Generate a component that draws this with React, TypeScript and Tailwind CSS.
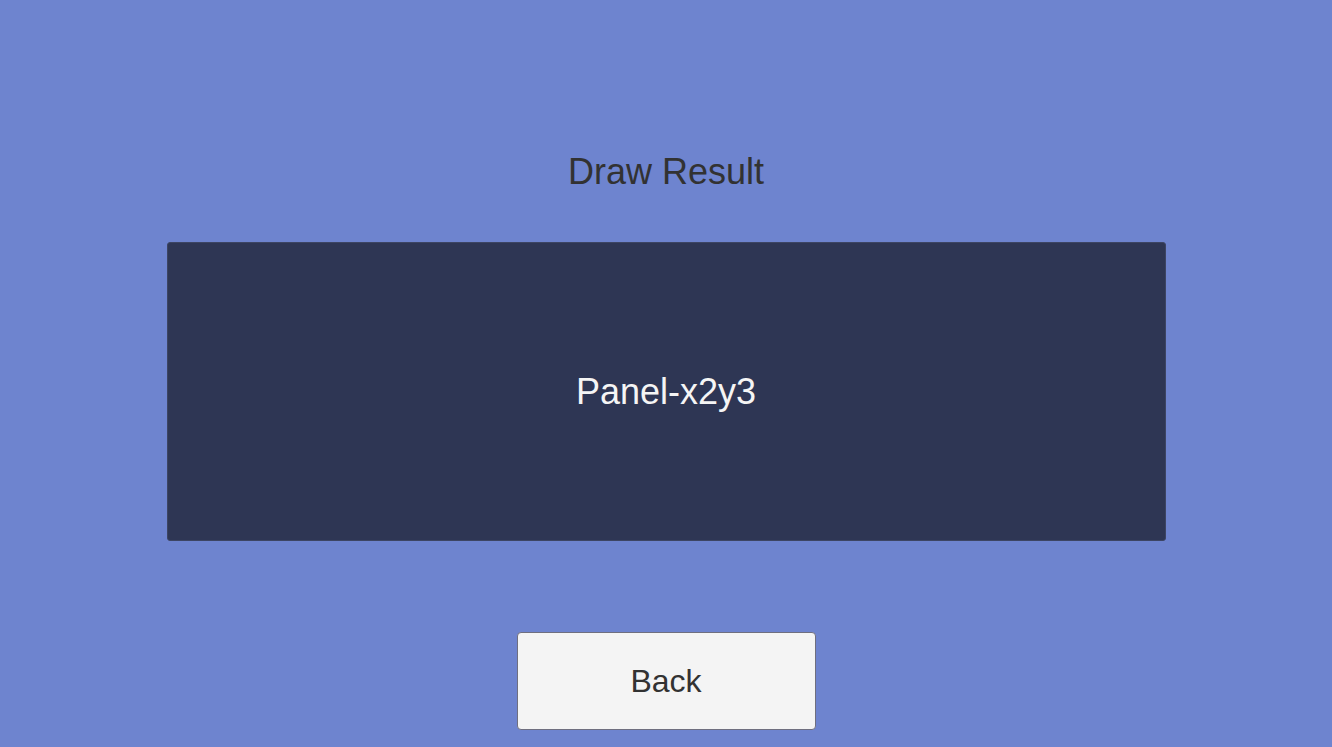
import React from "react";

export default function App() {
  return (
    <div
      className="w-[1332px] h-[747px] bg-[#6e84cf] flex flex-col items-center overflow-hidden"
      style={{ fontFamily: '"Liberation Sans", Arial, sans-serif' }}
    >
      <div className="mt-[152px] h-[40px] leading-[40px] text-[36px] text-[#323232]">Draw Result</div>
      <div className="mt-[50px] w-[999px] h-[299px] bg-[#2e3654] border border-[#3d4563] rounded-[3px] flex items-center justify-center">
        <span className="text-[36px] text-[#f5f5f5] leading-[40px]">Panel-x2y3</span>
      </div>
      <button className="mt-[91px] w-[299px] h-[98px] bg-[#f4f4f4] border border-[#6f6f7f] rounded-[4px] flex items-center justify-center text-[32px] text-[#323232]">
        Back
      </button>
    </div>
  );
}
